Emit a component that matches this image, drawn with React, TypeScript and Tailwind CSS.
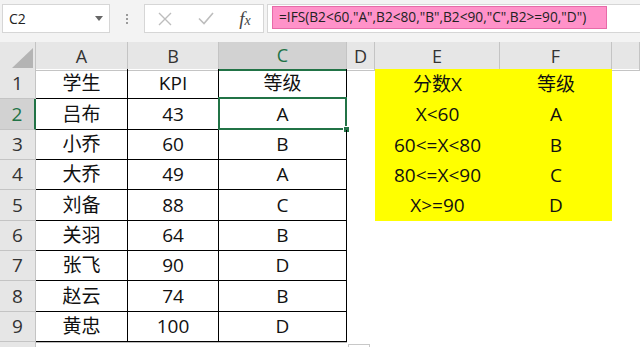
import React from 'react';

const font = { fontFamily: '"Open Sans", "Noto Sans CJK SC", sans-serif' };

const colTemplate = 'grid grid-cols-[36px_92px_91px_128px_28px_125px_112px_1fr]';

const rows: string[][] = [
  ['学生', 'KPI', '等级', '', '分数X', '等级'],
  ['吕布', '43', 'A', '', 'X<60', 'A'],
  ['小乔', '60', 'B', '', '60<=X<80', 'B'],
  ['大乔', '49', 'A', '', '80<=X<90', 'C'],
  ['刘备', '88', 'C', '', 'X>=90', 'D'],
  ['关羽', '64', 'B', '', '', ''],
  ['张飞', '90', 'D', '', '', ''],
  ['赵云', '74', 'B', '', '', ''],
  ['黄忠', '100', 'D', '', '', ''],
];

const rowHeights = ['h-[30px]', 'h-[31px]', 'h-[30px]', 'h-[30px]', 'h-[31px]', 'h-[30px]', 'h-[30px]', 'h-[31px]', 'h-[30px]'];

const Toolbar = () => (
  <div className="h-[42px] bg-[#f3f3f3] flex items-start pt-[4px] text-[14px] text-[#222]">
    <div className="ml-[2px] w-[108px] h-[29px] bg-white border border-[#d6d6d6] flex items-center pl-[6px] pr-[6px]">
      <span className="flex-1">C2</span>
      <svg width="8" height="5" viewBox="0 0 8 5"><path d="M0 0h8L4 5z" fill="#666" /></svg>
    </div>
    <div className="w-[34px] h-[29px] flex flex-col items-center justify-center gap-[2px]">
      <span className="w-[2px] h-[2px] bg-[#9a9a9a]" />
      <span className="w-[2px] h-[2px] bg-[#9a9a9a]" />
      <span className="w-[2px] h-[2px] bg-[#9a9a9a]" />
    </div>
    <div className="w-[120px] h-[29px] bg-white border border-[#d6d6d6] flex items-center">
      <div className="w-[40px] flex justify-center">
        <svg width="14" height="14" viewBox="0 0 14 14"><path d="M1 1L13 13M13 1L1 13" stroke="#bdbdbd" strokeWidth="1.4" /></svg>
      </div>
      <div className="w-[42px] flex justify-center">
        <svg width="16" height="13" viewBox="0 0 16 13"><path d="M1 6.5L6 11.5L15 1" stroke="#bdbdbd" strokeWidth="1.6" fill="none" /></svg>
      </div>
      <div className="w-[36px] flex justify-center items-baseline text-[#444] italic text-[19px] leading-none" style={{ fontFamily: '"Liberation Serif", serif' }}>
        f<span className="text-[14px]">x</span>
      </div>
    </div>
    <div className="ml-[3px] flex-1 h-[29px] bg-white border border-[#d6d6d6] border-r-0 pl-[4px] pt-[1px]">
      <div className="w-[335px] h-[23px] bg-[#ff92c9] border border-[#e76aa8] flex items-center pl-[6px] text-[13.7px] text-[#222]" style={font}>
        =IFS(B2&lt;60,"A",B2&lt;80,"B",B2&lt;90,"C",B2&gt;=90,"D")
      </div>
    </div>
  </div>
);

const HeaderRow = () => (
  <div className={`${colTemplate} h-[27px] bg-[#e6e6e6] text-[18px] text-[#333]`}>
    <div className="border-r border-b border-[#c4c4c4] flex items-end justify-end pr-[2px] pb-[2px]">
      <svg width="21" height="20" viewBox="0 0 21 20"><path d="M21 0V20H0z" fill="#b4b4b4" /></svg>
    </div>
    {['A', 'B', 'C', 'D', 'E', 'F', ''].map((c) =>
      c === 'C' ? (
        <div key={c} className="bg-[#d2d2d2] border-r border-[#c4c4c4] border-b-2 border-b-[#217346] text-[#217346] flex items-center justify-center">
          {c}
        </div>
      ) : (
        <div key={c || 'g'} className="border-r border-b border-[#c4c4c4] flex items-center justify-center">
          {c}
        </div>
      )
    )}
  </div>
);

const DataRow = ({ cells, index }: { cells: string[]; index: number }) => {
  const selected = index === 1;
  return (
    <div className={`${colTemplate} ${rowHeights[index]} text-[19px] text-[#111]`}>
      <div
        className={
          selected
            ? 'bg-[#d2d2d2] text-[#217346] border-r-2 border-r-[#217346] border-b border-b-[#c4c4c4] flex items-center justify-center'
            : 'bg-[#e6e6e6] text-[#333] border-r border-b border-[#c4c4c4] flex items-center justify-center'
        }
      >
        {index + 1}
      </div>
      {cells.slice(0, 3).map((v, i) => (
        <div key={i} className="relative border-r border-b border-black flex items-center justify-center">
          {v}
          {selected && i === 2 && (
            <div className="absolute top-[-2px] left-[-1px] right-[-1px] bottom-[-1px] border-2 border-[#217346]">
              <div className="absolute right-[-5px] bottom-[-5px] w-[7px] h-[7px] bg-[#217346] border border-white" />
            </div>
          )}
        </div>
      ))}
      <div />
      {index < 5 ? (
        <>
          <div className="bg-[#ffff00] flex items-center justify-center">{cells[4]}</div>
          <div className="bg-[#ffff00] flex items-center justify-center">{cells[5]}</div>
        </>
      ) : (
        <>
          <div />
          <div />
        </>
      )}
      <div />
    </div>
  );
};

export default function App() {
  return (
    <div className="w-[640px] h-[347px] overflow-hidden bg-white" style={font}>
      <Toolbar />
      <HeaderRow />
      {rows.map((r, i) => (
        <DataRow key={i} cells={r} index={i} />
      ))}
      <div className={`${colTemplate} h-[20px]`}>
        <div className="bg-[#e6e6e6] border-r border-[#c4c4c4]" />
        <div className="col-span-3 border-t border-[#bdbdbd]" />
        <div className="ml-[1px] mt-[2px] w-[22px] h-[16px] border border-[#c8c8c8] bg-white" />
      </div>
    </div>
  );
}
